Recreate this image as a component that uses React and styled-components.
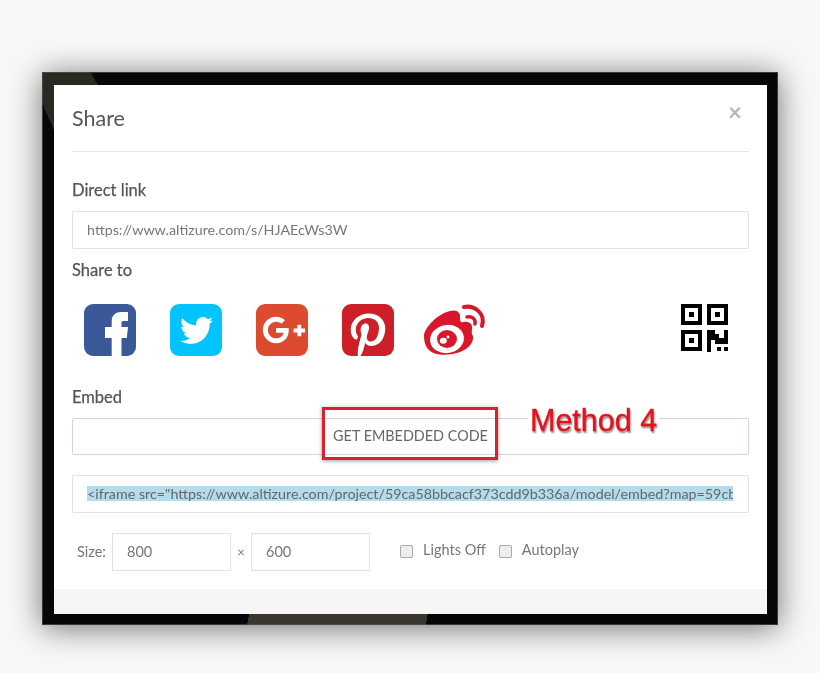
import React from 'react';
import styled, { createGlobalStyle } from 'styled-components';
import { FaTwitter, FaGooglePlusG, FaPinterestP } from 'react-icons/fa';

const GlobalStyle = createGlobalStyle`
  html, body {
    margin: 0;
    padding: 0;
    background: #f8f8f8;
  }
  * { box-sizing: border-box; }
`

const Page = styled.div`
  width: 820px;
  height: 673px;
  padding: 72px 0 0 42px;
  overflow: hidden;
  font-family: Lato, "Open Sans", sans-serif;
  color: #555;
  filter: blur(0.4px);
`

const Frame = styled.div`
  width: 736px;
  height: 553px;
  padding: 13px 11px 11px 12px;
  background-color: #070707;
  background-image:
    linear-gradient(58deg, #2b2823 47.6px, transparent 47.6px),
    linear-gradient(66deg, transparent 11px, #2b2823 11px),
    linear-gradient(100deg, transparent 2px, #3a3730 2px, #3a3730 178px, transparent 178px);
  background-size: 56px 13px, 12px 58px, 182px 11px;
  background-position: 0 0, 0 0, 205px 100%;
  background-repeat: no-repeat;
  box-shadow: inset 0 0 0 1px rgba(90, 90, 90, 0.6), 0 3px 30px rgba(0, 0, 0, 0.55);
`

const Modal = styled.div`
  width: 713px;
  height: 529px;
  background: #fff;
  display: flex;
  flex-direction: column;
`

const Header = styled.div`
  margin: 0 18px;
  height: 67px;
  border-bottom: 1px solid #e5e5e5;
  display: flex;
  justify-content: space-between;
  align-items: center;
`

const Title = styled.h4`
  margin: 0;
  font-size: 21.5px;
  font-weight: 400;
  color: #555;
`

const Close = styled.span`
  font-size: 24px;
  font-weight: 700;
  color: #b5b5b5;
  line-height: 1;
  margin-right: 7px;
  margin-top: -12px;
`

const Body = styled.div`
  flex: 1;
  padding: 0 18px;
  display: flex;
  flex-direction: column;
`

const Label = styled.div`
  font-size: 16.5px;
  color: #555;
  line-height: 20px;
  margin-top: ${p => p.$top}px;
  -webkit-text-stroke: 0.25px #555;
`

const Field = styled.div`
  height: 38px;
  margin-top: ${p => p.$top}px;
  padding: 0 15px 2px 14px;
  border: 1px solid #e2e2e2;
  border-radius: 2px;
  display: flex;
  align-items: center;
  font-size: 14.3px;
  color: #777;
  white-space: nowrap;
  overflow: hidden;
`

const Selected = styled.span`
  display: block;
  width: 100%;
  overflow: hidden;
  background: #b3dcec;
  line-height: 15px;
  color: #666;
`

const IconRow = styled.div`
  display: flex;
  align-items: center;
  height: 52px;
  margin-top: 24px;
  padding-left: 12px;
`

const Tile = styled.div`
  width: 52px;
  height: 52px;
  margin-right: 34px;
  border-radius: 9px;
  background: ${p => p.$bg};
  color: #fff;
  display: flex;
  justify-content: center;
  align-items: ${p => p.$align || 'center'};
  overflow: hidden;
`

const FacebookGlyph = styled.svg`
  width: 52px;
  height: 52px;
  display: block;
`

const GoogleGlyph = styled(FaGooglePlusG)`
  margin-left: 3px;
`

const PinterestGlyph = styled(FaPinterestP)`
  margin-bottom: -3px;
`

const WeiboIcon = styled.svg`
  width: 62px;
  height: 50px;
  margin-left: -4px;
  overflow: visible;
`

const QrIcon = styled.svg`
  width: 48px;
  height: 48px;
  margin-left: auto;
  margin-right: 20px;
  margin-top: -4px;
`

const EmbedWrap = styled.div`
  position: relative;
`

const GetCode = styled.div`
  height: 37px;
  margin-top: 11px;
  padding-bottom: 2px;
  border: 1px solid #cfd6e0;
  border-radius: 2px;
  display: flex;
  align-items: center;
  justify-content: center;
  font-size: 14.4px;
  color: #666;
`

const RedBox = styled.div`
  position: absolute;
  left: 250px;
  top: 0;
  width: 176px;
  height: 53px;
  border: 3px solid #d8232a;
  box-shadow: 0 1px 4px rgba(0, 0, 0, 0.4);
`

const MethodNote = styled.div`
  position: absolute;
  left: 456px;
  top: -6px;
  font-family: "Liberation Sans", Arial, sans-serif;
  font-size: 30.5px;
  line-height: 38px;
  color: #e8101a;
  background: #fff;
  padding: 0 2px;
  -webkit-text-stroke: 0.3px #e8101a;
  text-shadow: 1px 2px 2px rgba(0, 0, 0, 0.5);
`

const SizeRow = styled.div`
  display: flex;
  align-items: center;
  margin-top: 20px;
  padding-left: 5px;
  font-size: 14.5px;
  color: #777;
`

const SizeLabel = styled.span`
  margin-bottom: 2px;
`

const SizeBox = styled.div`
  width: 119px;
  height: 38px;
  margin-left: ${p => p.$left || 0}px;
  padding: 0 0 2px 14px;
  border: 1px solid #e2e2e2;
  display: flex;
  align-items: center;
`

const Times = styled.span`
  width: 20px;
  text-align: center;
  font-size: 13px;
`

const Check = styled.span`
  width: 13px;
  height: 13px;
  margin-left: ${p => p.$left}px;
  margin-right: 10px;
  margin-bottom: 2px;
  border: 1px solid #aaa;
  border-radius: 2px;
  background: #eee;
`

const CheckText = styled.span`
  margin-bottom: 5px;
`

const Footer = styled.div`
  height: 25px;
  background: #f6f6f6;
`

const App = () => {
  return (
    <Page>
      <GlobalStyle />
      <Frame>
        <Modal>
          <Header>
            <Title>Share</Title>
            <Close>×</Close>
          </Header>
          <Body>
            <Label $top={28}>Direct link</Label>
            <Field $top={11}>https://www.altizure.com/s/HJAEcWs3W</Field>
            <Label $top={11}>Share to</Label>
            <IconRow>
              <Tile $bg='#3b5998'>
                <FacebookGlyph viewBox='0 0 52 52'>
                  <path fill='#fff' d='M27.7 52V34H21V23h6.7v-6C27.7 11 32 8 37 8h7v9h-5c-1 0-1.5.8-1.5 2v4H44l-1.2 11h-5.3v18z' />
                </FacebookGlyph>
              </Tile>
              <Tile $bg='#00c3ff'><FaTwitter size={33} /></Tile>
              <Tile $bg='#dd4b2f'><GoogleGlyph size={44} /></Tile>
              <Tile $bg='#cc1f27' $align='flex-end'><PinterestGlyph size={46} /></Tile>
              <WeiboIcon viewBox='0 0 62 50'>
                <path fill='#d9172a' d='M0 30C2 20 16 8 26 6C33 4 37 8 36 13C36 17 37 18 39 17C44 16 49 18 48 24C48 27 47 28 49 31C50 38 44 44 36 47C28 50 12 52 5 45C1 41 0 36 0 30z' />
                <ellipse cx='23' cy='34' rx='17' ry='14' fill='#fff' transform='rotate(-10 23 34)' />
                <ellipse cx='23' cy='34' rx='10' ry='9' fill='#d9172a' />
                <ellipse cx='19.3' cy='35.7' rx='3.5' ry='3' fill='#fff' />
                <circle cx='24' cy='32' r='1.5' fill='#fff' />
                <path fill='none' stroke='#d9172a' strokeWidth='4' strokeLinecap='round' d='M40 2C50 0 62 8 58 21' />
                <path fill='none' stroke='#d9172a' strokeWidth='3.5' strokeLinecap='round' d='M43 12C48 11 52 14 51 19' />
              </WeiboIcon>
              <QrIcon viewBox='0 0 48 48'>
                <path fillRule='evenodd' d='M0 0h21v21H0zM4 4v13h13V4z' />
                <path d='M8 8h5v5H8z' />
                <path fillRule='evenodd' d='M26 0h21v21H26zM30 4v13h13V4z' />
                <path d='M34 8h5v5h-5z' />
                <path fillRule='evenodd' d='M0 26h21v21H0zM4 30v13h13V30z' />
                <path d='M8 34h5v5H8z' />
                <path d='M26 26h8v4h4v4h5v-8h4v14H34v-4h-4v12h-4z' />
                <path d='M36 43h4v4h-4zM43 43h4v4h-4z' />
              </QrIcon>
            </IconRow>
            <Label $top={31}>Embed</Label>
            <EmbedWrap>
              <GetCode>GET EMBEDDED CODE</GetCode>
              <RedBox />
              <MethodNote>Method 4</MethodNote>
            </EmbedWrap>
            <Field $top={20}>
              <Selected>{'<iframe src="https://www.altizure.com/project/59ca58bbcacf373cdd9b336a/model/embed?map=59cb'}</Selected>
            </Field>
            <SizeRow>
              <SizeLabel>Size:</SizeLabel>
              <SizeBox $left={6}>800</SizeBox>
              <Times>×</Times>
              <SizeBox>600</SizeBox>
              <Check $left={30} />
              <CheckText>Lights Off</CheckText>
              <Check $left={13} />
              <CheckText>Autoplay</CheckText>
            </SizeRow>
          </Body>
          <Footer />
        </Modal>
      </Frame>
    </Page>
  );
}

export default App;
